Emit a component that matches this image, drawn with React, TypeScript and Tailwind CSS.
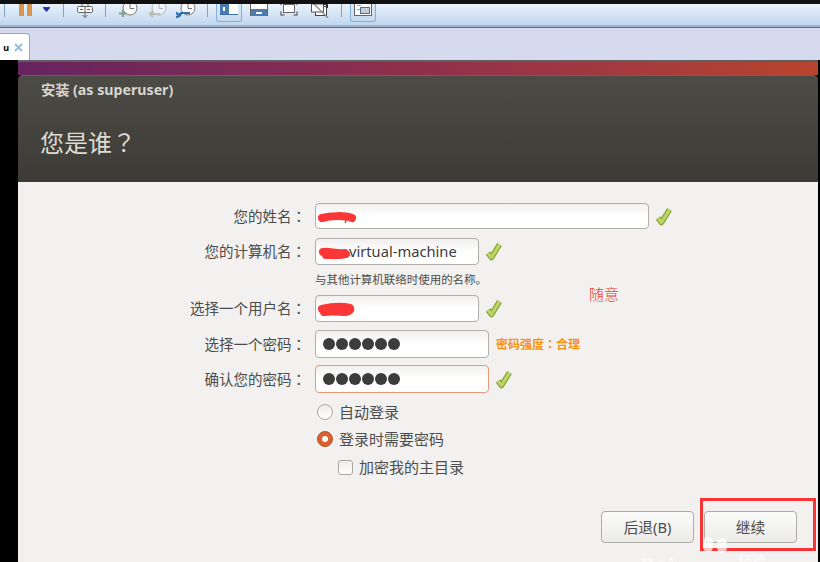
const font = { fontFamily: '"Noto Sans", "Noto Sans CJK SC", sans-serif' }
const colonFont = { fontFamily: '"Noto Sans CJK TC", sans-serif' }

function Sep({ className }: { className: string }) {
  return <div className={`h-[13px] w-px shrink-0 bg-[#7ea3c9] ${className}`} />
}

function Clock({ faded, children }: { faded?: boolean; children?: React.ReactNode }) {
  return (
    <svg className={`shrink-0 ${faded ? 'opacity-45' : ''}`} width="20" height="14" viewBox="0 0 20 14" fill="none">
      <circle cx="12" cy="4" r="7" fill="#fdfdfd" stroke="#777" />
      <path d="M12 0v4.500h4" stroke="#777" />
      {children}
    </svg>
  )
}

function Toolbar() {
  return (
    <div className="flex h-[23px] shrink-0 items-start overflow-hidden bg-gradient-to-b from-[#e9f1fa] to-[#bdd5ee] pl-[4px] shadow-[inset_0_-2px_0_#9eb3c9]">
      <Sep className="" />
      <div className="ml-[14px] flex w-[13px] shrink-0 justify-between">
        <div className="h-[12px] w-[5px] bg-[#d9964f]" />
        <div className="h-[12px] w-[5px] bg-[#d9964f]" />
      </div>
      <svg className="ml-[11px] mt-[3px] shrink-0" width="7" height="5" viewBox="0 0 7 5">
        <path d="M0 .5h7L3.500 4.500z" fill="#1c2cd0" stroke="#111" strokeWidth=".6" />
      </svg>
      <Sep className="ml-[13px]" />
      <svg className="ml-[13px] shrink-0" width="16" height="14" viewBox="0 0 16 14" fill="none" stroke="#666">
        <path d="M5 0v2M11 0v2" />
        <rect x=".5" y="2.500" width="15" height="6" rx="1" fill="#f6f6f6" />
        <path d="M8 2.500v11M5.500 11L8 13.500 10.500 11M3 5.500h3M10 5.500h3" />
      </svg>
      <Sep className="ml-[12px]" />
      <div className="ml-[12px] flex w-[78px] shrink-0 justify-between">
        <Clock>
          <path d="M1 9.500h8M5 6v7" stroke="#7fa388" strokeWidth="2.200" />
        </Clock>
        <Clock faded>
          <path d="M13 10H3M6 7l-3 3 3 3" stroke="#a08a70" strokeWidth="2.200" />
        </Clock>
        <Clock>
          <path d="M0 8c1 3 4 3 5 1h9M0 13c2 0 4-1 5-3" stroke="#2f70b0" strokeWidth="2.200" />
        </Clock>
      </div>
      <Sep className="ml-[11px]" />
      <div className="ml-[8px] flex h-[18px] w-[26px] shrink-0 justify-center rounded-b-[3px] border border-t-0 border-[#86aedb] bg-gradient-to-b from-[#dbe8f6] to-[#c6daf0]">
        <div className="flex h-[11px] w-[18px] border-b border-[#3d6ea5] bg-white">
          <div className="flex h-full w-[9px] items-center bg-[#4a7cb2]">
            <div className="ml-[3px] h-[4px] w-[2px] bg-white" />
          </div>
        </div>
      </div>
      <div className="ml-[8px] flex h-[12px] w-[18px] shrink-0 flex-col justify-end border-x border-[#666] bg-white">
        <div className="flex h-[7px] items-center justify-center bg-[#4a7cb2]">
          <div className="h-[2px] w-[6px] bg-white" />
        </div>
      </div>
      <svg className="ml-[12px] shrink-0" width="18" height="12" viewBox="0 0 18 12" fill="none" stroke="#777">
        <rect x="3.500" y=".5" width="11" height="8" fill="#fff" stroke="#666" />
        <path d="M1 7.500V11h3.500M17 7.500V11h-3.500M1 0v1M17 0v1" strokeWidth="1.500" />
      </svg>
      <svg className="ml-[13px] shrink-0" width="18" height="14" viewBox="0 0 18 14" fill="none">
        <rect x="4.500" y="2.500" width="11" height="9" fill="#fff" stroke="#444" />
        <rect x=".5" y="0" width="12" height="8" fill="#fff" stroke="#555" />
        <path d="M12 0h4v4" stroke="#333" strokeWidth="2" />
        <path d="M3 0l14 14" stroke="#888" strokeWidth="1.300" />
      </svg>
      <Sep className="ml-[12px]" />
      <div className="ml-[8px] flex h-[18px] w-[26px] shrink-0 justify-center rounded-b-[3px] border border-t-0 border-[#86aedb] bg-gradient-to-b from-[#dbe8f6] to-[#c6daf0]">
        <div className="relative h-[12px] w-[18px] border-x border-b border-[#666] bg-white">
          <div className="absolute left-[2px] top-[1px] h-[5px] w-[4px] border-y border-[#e09a3c]" />
          <div className="absolute bottom-[1px] right-[1px] h-[7px] w-[10px] border border-[#4a6f99] bg-[#c3ced9]" />
        </div>
      </div>
    </div>
  )
}

function TabStrip() {
  return (
    <div className="flex h-[33px] shrink-0 items-end border-t border-[#6d6d6d] bg-[#d5daee]">
      <div className="flex h-[27px] w-[30px] items-center justify-end gap-[5px] rounded-tr-[4px] border-r border-t border-[#8eabc9] bg-white pr-[6px]">
        <span className="text-[9px] font-bold leading-none text-black" style={font}>
          u
        </span>
        <svg width="9" height="9" viewBox="0 0 9 9" stroke="#9dbbd6" strokeWidth="2">
          <path d="M1 1l7 7M8 1l-7 7" />
        </svg>
      </div>
    </div>
  )
}

function Check() {
  return (
    <svg className="ml-[6px] shrink-0" width="17" height="19" viewBox="0 0 17 19" fill="none" strokeLinejoin="round">
      <path d="M3 11L6.500 15.500 14.500 2.500" stroke="#86a23a" strokeWidth="5.500" />
      <path d="M3 11L6.500 15.500 14.500 2.500" stroke="#bcd765" strokeWidth="3.200" />
    </svg>
  )
}

function Scribble({ d, w }: { d: string; w: number }) {
  return (
    <svg className="absolute left-[1px] top-[3px]" width={w} height="22" viewBox={`0 0 ${w} 22`} fill="none">
      <path d={d} stroke="#fb3636" strokeLinecap="round" strokeLinejoin="round" strokeWidth="8" />
    </svg>
  )
}

function Field({
  label,
  width,
  accent,
  className,
  children,
  after,
}: {
  label: string
  width: string
  accent?: boolean
  className: string
  children?: React.ReactNode
  after?: React.ReactNode
}) {
  return (
    <div className={`flex items-center ${className}`}>
      <div className="w-[288px] shrink-0 text-right text-[14.5px] leading-none text-[#4c4c4c]">
        {label}
        <span style={colonFont}>：</span>
      </div>
      <div
        className={`relative ml-[9px] flex h-full items-center rounded-[4px] border bg-gradient-to-b from-[#f1f0ee] via-white to-white pl-[6px] text-[14.7px] text-[#3c3c3c] ${width} ${
          accent ? 'border-[#ea9a76]' : 'border-[#b0aeaa]'
        }`}
      >
        {children}
      </div>
      {after}
    </div>
  )
}

function Dots() {
  return (
    <div className="ml-[1px] flex gap-[1px]">
      {[0, 1, 2, 3, 4, 5].map((i) => (
        <div key={i} className="h-[12px] w-[12px] rounded-full bg-[#3c3c3c]" />
      ))}
    </div>
  )
}

function Button({ label }: { label: string }) {
  return (
    <div className="flex h-[32px] w-[93px] items-center justify-center rounded-[4px] border border-[#aeaca8] bg-gradient-to-b from-[#fbfbfa] to-[#ecebe8] text-[14.67px] text-[#4c4c4c]">
      {label}
    </div>
  )
}

function Form() {
  return (
    <div className="relative flex min-h-0 flex-1 flex-col bg-[#f2f1ef] pt-[21px]" style={font}>
      <Field label="您的姓名" width="w-[334px]" className="h-[26px]" after={<Check />}>
        <span className="pl-[22px] text-[12px]">p</span>
        <Scribble d="M5 11c8-2 22-3 30 0" w={42} />
      </Field>
      <Field label="您的计算机名" width="w-[164px]" className="mt-[9px] h-[27px]" after={<Check />}>
        <span className="pl-[27px]">virtual-machine</span>
        <Scribble d="M6 10c6-1 14 2 22 1l1 1c-6 2-14 1-20 1" w={36} />
      </Field>
      <div className="ml-[297px] mt-[8px] h-[14px] text-[11.47px] leading-[14px] text-[#4c4c4c]">
        与其他计算机联络时使用的名称。
      </div>
      <Field label="选择一个用户名" width="w-[164px]" className="mt-[8px] h-[27px]" after={<Check />}>
        <Scribble d="M5 10c8-2 20-3 28-1 1 2-1 3-4 4-5 0-14-1-22 0" w={40} />
      </Field>
      <Field
        label="选择一个密码"
        width="w-[174px]"
        className="mt-[8px] h-[28px]"
        after={
          <span className="ml-[7px] text-[12px] font-bold text-[#f79212]">
            密码强度<span style={colonFont}>：</span>合理
          </span>
        }
      >
        <Dots />
      </Field>
      <Field label="确认您的密码" width="w-[174px]" accent className="mt-[7px] h-[28px]" after={<Check />}>
        <Dots />
      </Field>
      <div className="ml-[299px] mt-[11px] flex h-[16px] items-center text-[15px] text-[#4c4c4c]">
        <div className="h-[16px] w-[16px] rounded-full border border-[#aaa8a4] bg-gradient-to-b from-[#eeedeb] to-white" />
        <span className="ml-[6px]">自动登录</span>
      </div>
      <div className="ml-[299px] mt-[11px] flex h-[16px] items-center text-[15px] text-[#4c4c4c]">
        <div className="flex h-[16px] w-[16px] items-center justify-center rounded-full border border-[#b4532b] bg-[#d9622e]">
          <div className="h-[6px] w-[6px] rounded-full bg-white" />
        </div>
        <span className="ml-[6px]">登录时需要密码</span>
      </div>
      <div className="ml-[320px] mt-[12px] flex h-[16px] items-center text-[15px] text-[#4c4c4c]">
        <div className="h-[15px] w-[15px] rounded-[3px] border border-[#aaa8a4] bg-gradient-to-b from-[#eeedeb] to-white" />
        <span className="ml-[6px]">加密我的主目录</span>
      </div>
      <div className="mt-auto flex justify-end gap-[10px] pb-[19px] pr-[21px]">
        <Button label="后退(B)" />
        <Button label="继续" />
      </div>
      <span className="absolute left-[571px] top-[105px] text-[15px] font-light leading-none text-[#e63a32]">随意</span>
    </div>
  )
}

export default function App() {
  return (
    <div className="relative flex h-[562px] w-[820px] flex-col overflow-hidden bg-black">
      <div className="h-[4px] shrink-0 bg-[#111]" />
      <Toolbar />
      <TabStrip />
      <div className="flex min-h-0 flex-1">
        <div className="w-[18px] shrink-0 bg-black" />
        <div className="flex min-w-0 flex-1 flex-col">
          <div className="h-[15px] shrink-0 border-t-2 border-[#5f5f5f] bg-gradient-to-r from-[#66235f] via-[#8f2f4b] to-[#b8442c]" />
          <div
            className="flex h-[107px] shrink-0 flex-col rounded-t-[5px] border-t border-[#66655d] bg-gradient-to-b from-[#4c4b45] to-[#3c3b37] pl-[22px]"
            style={font}
          >
            <div className="ml-[1px] mt-[5px] text-[14.2px] font-bold leading-[18px] text-[#d8d5cf]">安装 (as superuser)</div>
            <div className="mt-[26px] text-[24px] leading-[34px] text-[#dfdbd2]">
              您是谁<span style={colonFont}>？</span>
            </div>
          </div>
          <Form />
        </div>
        <div className="w-[2px] shrink-0 bg-black" />
      </div>
      <div className="absolute left-[700px] top-[498px] h-[53px] w-[116px] border-[3px] border-[#f93434]" />
      <div className="absolute left-[640px] top-[553px] text-[22px] font-bold leading-none text-white/60" style={font}>
        Bai
      </div>
      <div className="absolute left-[703px] top-[537px] flex gap-[4px]">
        <div className="h-[15px] w-[10px] rounded-full bg-white/70" />
        <div className="mt-[1px] h-[15px] w-[10px] rounded-full bg-white/70" />
      </div>
      <div className="absolute left-[738px] top-[554px] text-[14px] font-bold leading-none text-white/60" style={font}>
        经验
      </div>
    </div>
  )
}
